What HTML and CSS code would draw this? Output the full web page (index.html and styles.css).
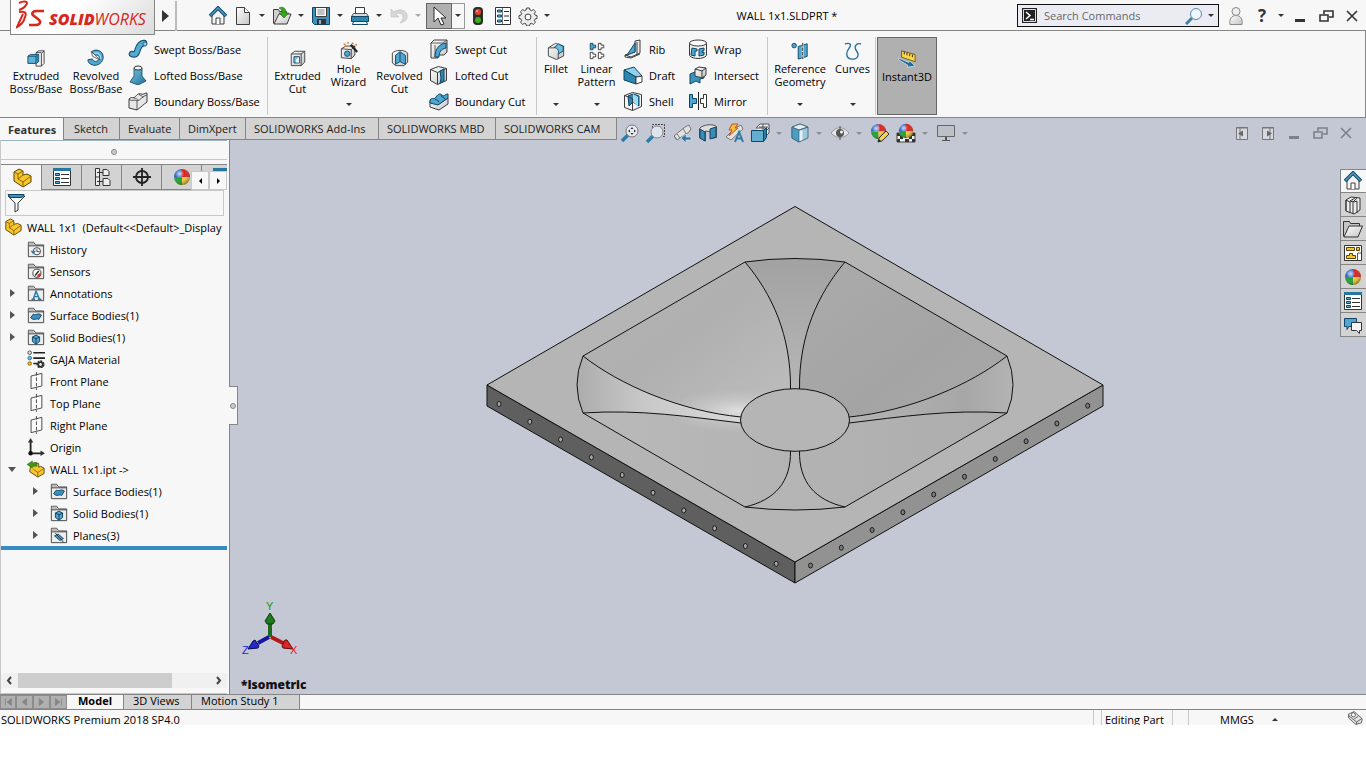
FILE: index.html
```html
<!DOCTYPE html>
<html lang="en">

<head>
    <meta charset="utf-8">
    <title>WALL 1x1.SLDPRT *</title>
    <link rel="stylesheet" href="styles.css">
</head>

<body>

<!-- icon sprite, all icons on a 20x20 grid -->
<svg class="sprite" width="0" height="0" aria-hidden="true">
    <defs>
        <linearGradient id="g-blue" x1="0" y1="0" x2="1" y2="1"><stop offset="0" stop-color="#7fc6e4"/><stop offset="1" stop-color="#1f6d98"/></linearGradient>
        <linearGradient id="g-grey" x1="0" y1="0" x2="1" y2="1"><stop offset="0" stop-color="#ffffff"/><stop offset="1" stop-color="#c4c4c4"/></linearGradient>
        <radialGradient id="g-shine" cx=".35" cy=".3" r=".75"><stop offset="0" stop-color="#fff" stop-opacity=".8"/><stop offset=".4" stop-color="#fff" stop-opacity="0"/><stop offset="1" stop-color="#000" stop-opacity=".45"/></radialGradient>
    </defs>

    <symbol id="i-home" viewBox="0 0 20 20"><path d="M4 9v9h12V9l-6-6z" fill="#f4f4f4" stroke="#3c3c3c"/><path d="M8 18v-6h4v6" fill="#fff" stroke="#3c3c3c"/><path d="M2 10l8-8 8 8" fill="none" stroke="#0f4565" stroke-width="3.500"/><path d="M2.500 9.500l7.500-7.500 7.500 7.500" fill="none" stroke="#4f9cc4" stroke-width="1.500"/></symbol>
    <symbol id="i-new" viewBox="0 0 20 20"><path d="M3.500 1.500h8l5 5v12h-13z" fill="url(#g-grey)" stroke="#3c3c3c" stroke-linejoin="round"/><path d="M11.500 1.500v5h5" fill="#fff" stroke="#3c3c3c"/></symbol>
    <symbol id="i-open" viewBox="0 0 20 20"><path d="M1.500 17.500v-14h5l1 2h7v3" fill="#cfcfcf" stroke="#3c3c3c"/><path d="M2 18l5-10h12l-4 10z" fill="url(#g-grey)" stroke="#3c3c3c"/><path d="M7 2c4-2 7 0 7 5h3l-5 5-5-5h3c0-3-1-4-3-5z" fill="#3aa51c" stroke="#1d6b0b" stroke-width=".6"/></symbol>
    <symbol id="i-save" viewBox="0 0 20 20"><path d="M1.500 1.500h17v17h-15l-2-2z" fill="#3f8fb8" stroke="#0f4565"/><path d="M4.500 1.500h11v9h-11z" fill="#fafafa" stroke="#3c3c3c"/><path d="M6.500 4h7M6.500 6h7M6.500 8h7" stroke="#888"/><path d="M6 13h9v5.500H6z" fill="#333"/><path d="M8 14h2v4H8z" fill="#9ac"/></symbol>
    <symbol id="i-print" viewBox="0 0 20 20"><path d="M5.500 9V1.500h9V9" fill="#fff" stroke="#3c3c3c"/><path d="M3.500 7.500h13l2 3H1.500z" fill="#d9d9d9" stroke="#555"/><path d="M1.500 10.500h17v5h-17z" fill="#2f86b0" stroke="#0f4565"/><path d="M3.500 15.500h13l1 3h-15z" fill="#e8f4fa" stroke="#0f4565"/></symbol>
    <symbol id="i-undo" viewBox="0 0 20 20"><path d="M2 3v8h8l-3-3c4-2 7 0 7 3s-2 4-3 6c5-1 8-4 7-8-1-5-8-7-13-3z" fill="#d7d7d7" stroke="#c0c0c0" stroke-width=".7"/></symbol>
    <symbol id="i-cursor" viewBox="0 0 20 20"><path d="M5 1v15l4-4 3 7 3-1-3-6h5z" fill="#fff" stroke="#2b2b2b"/></symbol>
    <symbol id="i-light" viewBox="0 0 20 20"><rect x="5" y="1" width="10" height="18" rx="4" fill="#2d2d2d"/><circle cx="10" cy="6" r="3" fill="#e8432a"/><circle cx="10" cy="14" r="3" fill="#39b020"/><circle cx="9" cy="5" r="1" fill="#ff9c80"/></symbol>
    <symbol id="i-list" viewBox="0 0 20 20"><path d="M1.500 1.500h17v17h-17z" fill="#fff" stroke="#333"/><path d="M1 1h18v3H1z" fill="#27779f"/><path d="M3.500 6.500h4v2h-4zM3.500 10.500h4v2h-4zM3.500 14.500h4v2h-4z" fill="#5ab0d8" stroke="#0f4565"/><path d="M9 7.500h8M9 11.500h8M9 15.500h8" stroke="#333"/></symbol>
    <symbol id="i-options" viewBox="0 0 20 20"><path d="M2.500 1.500h15v17h-15z" fill="#fff" stroke="#333"/><path d="M9.500 2v16" stroke="#777"/><path d="M4.500 4h4v2h-4zM4.500 9h4v2h-4zM4.500 14h4v2h-4z" fill="#5ab0d8" stroke="#0f4565"/><path d="M11 5.500h5M11 10h5M11 14.500h5" stroke="#333"/></symbol>
    <symbol id="i-gear" viewBox="0 0 20 20"><path d="M8.500 2h3l.5 2 1.500.7 1.900-1.100 2.100 2.100-1.100 1.900.6 1.400 2 .5v3l-2 .5-.6 1.500 1.100 1.800-2.100 2.100-1.900-1.100-1.500.6-.5 2h-3l-.5-2-1.500-.6-1.800 1.100-2.200-2.100 1.100-1.800L3 13l-2-.5v-3L3 9l.6-1.400-1.100-1.900 2.200-2.100 1.800 1.100L8 4z" fill="#ececec" stroke="#444"/><circle cx="10" cy="11" r="3" fill="#fff" stroke="#444"/></symbol>
    <symbol id="i-user" viewBox="0 0 20 20"><path d="M4 18.500c-1-6 2-9 6-9s7 3 6 9z" fill="url(#g-grey)" stroke="#888"/><circle cx="10" cy="5.500" r="4" fill="#eee" stroke="#888"/></symbol>
    <symbol id="i-min" viewBox="0 0 20 20"><path d="M5 13h10v3H5z" fill="currentColor"/></symbol>
    <symbol id="i-restore" viewBox="0 0 20 20"><path d="M8 8.500V5h9v6h-4" fill="none" stroke="currentColor" stroke-width="1.600"/><path d="M4 9h8v6H4z" fill="none" stroke="currentColor" stroke-width="1.600"/></symbol>
    <symbol id="i-close" viewBox="0 0 20 20"><path d="M5 5l10 10M15 5L5 15" fill="none" stroke="currentColor" stroke-width="1.600"/></symbol>

    <symbol id="i-exboss" viewBox="0 0 20 20"><path d="M10 4l3-2h6v14l-3 3h-6z" fill="#f3f3f3" stroke="#3c3c3c"/><path d="M16 19V5l3-3M10 4h6" fill="none" stroke="#3c3c3c"/><path d="M1 8l3-2h9v8l-3 2H1z" fill="#5fb2d8" stroke="#0f4565"/><path d="M1 8h9v8M10 8l3-2" fill="none" stroke="#0f4565"/><path d="M10 8l3-2v8l-3 2z" fill="#2f7ba3"/></symbol>
    <symbol id="i-revboss" viewBox="0 0 20 20"><path d="M5 3c5-4 13-1 13 6 0 6-6 10-11 9-4-1-6-3-6-6l5-1c1 3 5 4 7 1 2-4-1-6-4-5z" fill="#4fa6d0" stroke="#0f4565"/><path d="M8 5c5-2 8 2 7 6" fill="none" stroke="#9fd8ee" stroke-width="1.500"/><path d="M5 3l4 4 5 5-8-4z" fill="#fff" stroke="#333" stroke-width=".8"/></symbol>
    <symbol id="i-sweep" viewBox="0 0 20 20"><path d="M4 15c8 3 3-10 12-11" fill="none" stroke="#0f4565" stroke-width="6.500" stroke-linecap="round"/><path d="M4 15c8 3 3-10 12-11" fill="none" stroke="#56aad2" stroke-width="4.500" stroke-linecap="round"/><circle cx="17" cy="5" r="2" fill="#8fd0ea" stroke="#0f4565" stroke-width=".7"/></symbol>
    <symbol id="i-loft" viewBox="0 0 20 20"><path d="M6 3v8l-4 6 8 3 8-4-4-5V3z" fill="url(#g-blue)" stroke="#0f4565" stroke-width=".8"/><ellipse cx="10" cy="3" rx="4" ry="2" fill="#f4f4f4" stroke="#333"/></symbol>
    <symbol id="i-bound" viewBox="0 0 20 20"><path d="M1 8c3-3 4 0 6-2s3-4 6-3 3-1 6-1v9c-3 2-6 5-10 8l-8-2z" fill="#e7e7e7" stroke="#3c3c3c"/><path d="M1 8c3 3 5 0 8 2 4-1 5-5 10-6M9 10v9M5 6c2 3 4 0 5 4M11 3c1 3 3 0 4 4" fill="none" stroke="#3c3c3c" stroke-width=".8"/></symbol>
    <symbol id="i-excut" viewBox="0 0 20 20"><path d="M2.500 5.500l4-3h11v12l-4 4h-11z" fill="url(#g-grey)" stroke="#3c3c3c"/><path d="M2.500 5.500h11v13M13.500 5.500l4-3" fill="none" stroke="#3c3c3c"/><path d="M5.500 8.500h6v7h-6z" fill="#7fc6e4" stroke="#0f4565"/><path d="M11 9v6H8v-3z" fill="#fff"/></symbol>
    <symbol id="i-hole" viewBox="0 0 20 20"><path d="M1.500 7.500l5-3h10v10l-4 4-11-1z" fill="url(#g-grey)" stroke="#3c3c3c"/><path d="M1.500 7.500l11 1v10M12.500 8.500l4-4" fill="none" stroke="#3c3c3c"/><circle cx="8" cy="13" r="3" fill="#4fa6d0" stroke="#0f4565"/><path d="M12 3l7 8" stroke="#222" stroke-width="2.500"/><path d="M4 2l2 1M9 0v2M13 1l2 1M17 3h2M5 5l2-1" stroke="#d7792a" stroke-width="1.500"/></symbol>
    <symbol id="i-revcut" viewBox="0 0 20 20"><path d="M1.500 4.500c4-4 13-4 17 0v10l-4 4h-9l-4-3z" fill="url(#g-grey)" stroke="#3c3c3c"/><path d="M5 7l5-4 6 4v10l-6-3-5 3z" fill="#4fa6d0" stroke="#0f4565"/><path d="M10 3v11" stroke="#0f4565"/></symbol>
    <symbol id="i-sweepcut" viewBox="0 0 20 20"><path d="M2 4l3-3h13v12l-3 3H9v3H2z" fill="url(#g-grey)" stroke="#3c3c3c"/><path d="M2 4h12l4-3M6 18V6" fill="none" stroke="#3c3c3c" stroke-width=".8"/><path d="M6 18c0-8 4-13 11-14v5c-5 1-7 4-7 9z" fill="#4fa6d0" stroke="#0f4565"/></symbol>
    <symbol id="i-loftcut" viewBox="0 0 20 20"><path d="M1.500 4.500l8-3 8 2v12l-9 4-7-4z" fill="url(#g-grey)" stroke="#3c3c3c"/><path d="M1.500 4.500l7 3v12M8.500 7.500l9-4" fill="none" stroke="#3c3c3c"/><path d="M11 6l4-2v12l-4 2 1-5z" fill="#2f86b0" stroke="#0f4565"/></symbol>
    <symbol id="i-boundcut" viewBox="0 0 20 20"><path d="M1 10l9 3 9-6v6l-9 6-9-3z" fill="url(#g-grey)" stroke="#3c3c3c"/><path d="M1 9c3-3 4 0 6-3s4-4 6-2 3-1 6-1v4l-10 7-8-2z" fill="#4fa6d0" stroke="#0f4565"/><path d="M5 7c2 3 4 1 5 4M12 4c0 3 3 1 4 4" fill="none" stroke="#0f4565"/></symbol>
    <symbol id="i-fillet" viewBox="0 0 20 20"><path d="M1.500 6.500l8-5 9 3v11l-8 4-9-4z" fill="url(#g-grey)" stroke="#3c3c3c"/><path d="M8 6l5-4 5 3v5l-5 3c0-4-1-6-5-7z" fill="#6dbde0" stroke="#0f4565"/><path d="M1.500 6.500h7M12.500 12v7" fill="none" stroke="#3c3c3c"/></symbol>
    <symbol id="i-pattern" viewBox="0 0 20 20"><path d="M2.500 1.500h3v2h3v3h-3v2h-3z" fill="#4fa6d0" stroke="#0f4565"/><path d="M11.500 1.500h3v2h3v3h-3v2h-3zM2.500 11.500h3v2h3v3h-3v2h-3zM11.500 11.500h3v2h3v3h-3v2h-3z" fill="#fff" stroke="#333"/></symbol>
    <symbol id="i-rib" viewBox="0 0 20 20"><path d="M12 2l5-1v13l-9 4-6-2 10-3z" fill="#eee" stroke="#3c3c3c"/><path d="M12 4v9l-8 3z" fill="#4fa6d0" stroke="#0f4565"/><path d="M14 3v13M2 16v2l6 1 9-4" fill="none" stroke="#3c3c3c"/></symbol>
    <symbol id="i-draft" viewBox="0 0 20 20"><path d="M1 5l10-3 8 9-6 1z" fill="#8fd0ea" stroke="#0f4565"/><path d="M1 5l12 7v7L1 15z" fill="#2f86b0" stroke="#0f4565"/><path d="M13 12l6-1v6l-6 2z" fill="#fff" stroke="#3c3c3c"/></symbol>
    <symbol id="i-shell" viewBox="0 0 20 20"><path d="M1.500 4.500l8-3 9 2v12l-9 4-8-3z" fill="#f4f4f4" stroke="#3c3c3c"/><path d="M5 5l5-2 6 2v10l-6-4-4 4z" fill="#2f86b0" stroke="#0f4565"/><path d="M10 3v8l5 4V6z" fill="#9fd8ee"/><path d="M1.500 4.500l8 3v12" fill="none" stroke="#3c3c3c"/></symbol>
    <symbol id="i-wrap" viewBox="0 0 20 20"><path d="M1.500 4.500v12c3 4 14 4 17 0v-12" fill="#eee" stroke="#3c3c3c"/><ellipse cx="10" cy="4" rx="8.500" ry="3" fill="#fff" stroke="#3c3c3c"/><path d="M4 9l5 1v2H7v5l-4-1zM16 9l-5 1v7l5-1v-3l-2 .5V12l2-.5z" fill="#4fa6d0" stroke="#0f4565"/></symbol>
    <symbol id="i-intersect" viewBox="0 0 20 20"><path d="M2 9l5-2h9v6l-4 1v4l-4-2-6 3z" fill="#3b93bd" stroke="#0f4565"/><path d="M7 4l4-2 7 1v7l-4 3-7-2z" fill="url(#g-grey)" stroke="#3c3c3c"/><path d="M7 4l7 2v7M14 6l4-3" fill="none" stroke="#3c3c3c"/></symbol>
    <symbol id="i-mirror" viewBox="0 0 20 20"><path d="M1.500 3.500h3v4h4v5h-4v4h-3z" fill="#4fa6d0" stroke="#0f4565"/><path d="M18.500 3.500h-3v4h-3v5h3v4h3z" fill="#fff" stroke="#333"/><path d="M10.500 1v18" stroke="#222"/></symbol>
    <symbol id="i-refgeo" viewBox="0 0 20 20"><circle cx="3.500" cy="4" r="2.500" fill="#4fa6d0" stroke="#0f4565"/><path d="M8 5l10-3v14L8 19z" fill="#4fa6d0" stroke="#0f4565"/><path d="M13 1v18" stroke="#fff" stroke-width="2"/><path d="M13 1v18" stroke="#222" stroke-dasharray="4 1"/></symbol>
    <symbol id="i-curves" viewBox="0 0 20 20"><path d="M1 2c8-2 7 2 4 6s-3 11 4 11 8-5 5-9-2-9 5-8" fill="none" stroke="#256f96" stroke-width="1.500"/></symbol>
    <symbol id="i-instant" viewBox="0 0 20 20"><path d="M4 1l15 4v8L4 8z" fill="#ffd84a" stroke="#6a5312"/><path d="M7 2v3M10 3v3M13 4v3M16 5v3" stroke="#222"/><path d="M1 9l11 5 1-2 6 6-9 1 1-2L1 11z" fill="#1f6d98" stroke="#e8f4fa" stroke-width=".7"/></symbol>

    <symbol id="i-zoomfit" viewBox="0 0 20 20"><path d="M2 18l6-6" stroke="#2f7ba3" stroke-width="3.500"/><circle cx="12" cy="8" r="6" fill="#e6ebf0" stroke="#777"/><path d="M12 4l-1.500 2h3zM12 12l-1.500-2h3zM8 8l2-1.500v3zM16 8l-2-1.500v3z" fill="#333"/></symbol>
    <symbol id="i-zoomarea" viewBox="0 0 20 20"><path d="M6.500 5V1.500h12v12H16" fill="none" stroke="#444" stroke-dasharray="2 1"/><path d="M1 19l6-6" stroke="#2f7ba3" stroke-width="3.500"/><circle cx="11" cy="9" r="6" fill="#dde5ec" stroke="#888"/></symbol>
    <symbol id="i-prev" viewBox="0 0 20 20"><path d="M2 13l11-9 4-2 2 4-2 3-12 8z" fill="#e2e2e2" stroke="#777"/><path d="M11 5l3 6M2 13l3 4M5 11l3 4" stroke="#777"/><path d="M9 15l5-4v3h5v3h-5v3z" fill="#2f7ba3" stroke="#dfe6ec" stroke-width=".6"/></symbol>
    <symbol id="i-section" viewBox="0 0 20 20"><path d="M1.500 5.500c3-4 14-5 17-2v11l-5 1V9l-6-1v10l-6-3z" fill="#dedede" stroke="#555"/><path d="M2 6l5 3v9l-5-3zM12 6l6-2v10l-6 2z" fill="#3b8db6" stroke="#0f4565"/></symbol>
    <symbol id="i-dynview" viewBox="0 0 20 20"><path d="M2 14l9-9 6-3 2 4-12 11z" fill="#e2e2e2" stroke="#777"/><path d="M8 1h6l-3 4h3l-9 8 3-6H5z" fill="#f2c13c" stroke="#c8521c"/><path d="M11 19l4-10 4 10M12.500 15.500h5" fill="none" stroke="#2f7ba3" stroke-width="2"/></symbol>
    <symbol id="i-orient" viewBox="0 0 20 20"><path d="M6 5l4-4h9v9l-4 4" fill="#f1f1f1" stroke="#555"/><path d="M13 1v7M6 5h9M9 4h9M15 9l4-4" stroke="#555"/><path d="M1.500 7.500h12v11h-12z" fill="#62afd2" stroke="#0f4565"/><path d="M13.500 7.500l3-3v10l-3 4z" fill="#2f7ba3" stroke="#0f4565"/></symbol>
    <symbol id="i-style" viewBox="0 0 20 20"><path d="M2 4l8-3 8 3v11l-9 4-7-4z" fill="#9cc9de" stroke="#4b6f82"/><path d="M2 4l7 3v12l-7-4z" fill="#4a9fc6" stroke="#3c6d88"/><path d="M9 7l9-3M2 4l8-3 8 3-9 3z" fill="#e5eef3" stroke="#4b6f82"/><path d="M9.500 8l3-1v10l-3 1z" fill="#e5eef3"/></symbol>
    <symbol id="i-eye" viewBox="0 0 20 20"><path d="M1 10c5-7 13-7 18 0-5 6-13 6-18 0z" fill="#e2e4e8" stroke="#999"/><circle cx="10" cy="10" r="4" fill="#555"/><path d="M10 3v14" stroke="#555"/><circle cx="11.500" cy="9" r="1.500" fill="#fff"/></symbol>
    <symbol id="i-ball" viewBox="0 0 20 20"><path d="M10 10V2a8 8 0 0 0-8 8z" fill="#2c62c8"/><path d="M10 10V2a8 8 0 0 1 8 8z" fill="#d8221f"/><path d="M10 10H2a8 8 0 0 0 8 8z" fill="#1fa02c"/><path d="M10 10h8a8 8 0 0 1-8 8z" fill="#f3cc3a"/><circle cx="10" cy="10" r="8" fill="url(#g-shine)"/></symbol>
    <symbol id="i-ballpen" viewBox="0 0 20 20"><use href="#i-ball" x="-1" y="-1" width="19" height="19"/><path d="M8 19l1-4 7-7 3 3-7 7z" fill="#f4cf5a" stroke="#333"/><path d="M8 19l1-3 2 2z" fill="#222"/></symbol>
    <symbol id="i-scene" viewBox="0 0 20 20"><path d="M1 10h18v9H1z" fill="#eee" stroke="#444"/><path d="M1 10h4v3H1zM9 16h4v3H9zM15 10h4v3h-4zM4 13h3v3H4zM13 13h3v3h-3zM1 16h3v3H1zM16 16h3v3h-3z" fill="#333"/><use href="#i-ball" x="1" y="-1" width="18" height="18"/></symbol>
    <symbol id="i-monitor" viewBox="0 0 20 20"><path d="M1.500 2.500h17v11h-17z" fill="#bcc1c8" stroke="#666"/><path d="M9 14h2v3h3v1H6v-1h3z" fill="#555"/></symbol>
    <symbol id="i-paneL" viewBox="0 0 20 20"><path d="M4.500 4.500h11v12h-11z" fill="#d6d9e1" stroke="#777"/><path d="M8 4v12M4 5h12" stroke="#777"/><path d="M6 10.500l5-3v6z" fill="#666"/></symbol>
    <symbol id="i-paneR" viewBox="0 0 20 20"><path d="M4.500 4.500h11v12h-11z" fill="#d6d9e1" stroke="#777"/><path d="M12 4v12M4 5h12" stroke="#777"/><path d="M14 10.500l-5-3v6z" fill="#666"/></symbol>

    <symbol id="i-part" viewBox="0 0 20 20"><path d="M2 4l5-3 4 2v4l4-1 4 2v6l-8 5-9-6z" fill="#f7c62c" stroke="#5a430a"/><path d="M2 4l4 2v5l5 3v5M6 6l5-3M6 11l5-4M11 14l8-6" fill="none" stroke="#8a6510"/></symbol>
    <symbol id="i-import" viewBox="0 0 20 20"><path d="M4 6l5-3 4 1v4l2-1 4 2v6l-7 4-9-6z" fill="#f7c62c" stroke="#5a430a"/><path d="M7 10l5 4v5M12 14l7-5" fill="none" stroke="#8a6510"/><path d="M0 5l6-4v2h5v4H6v2z" fill="#3c9a18" stroke="#1d5c08" stroke-width=".5"/></symbol>
    <symbol id="i-config" viewBox="0 0 20 20"><path d="M3.500 1.500h4v17h-4zM11 2.500h4l2 2v4h-6zM11 11.500h5l2 2v5h-7z" fill="#eee" stroke="#333"/><path d="M5 5.500h6M5 14.500h6M3 10h4" stroke="#333"/></symbol>
    <symbol id="i-target" viewBox="0 0 20 20"><circle cx="10" cy="10" r="6" fill="none" stroke="#222" stroke-width="1.800"/><path d="M10 1v18M1 10h18" stroke="#222" stroke-width="1.800"/></symbol>
    <symbol id="i-funnel" viewBox="0 0 20 20"><path d="M2 3h17l-7 7v7l-3 2v-9z" fill="#f7fbfd" stroke="#333"/><path d="M2 1.500h16l-2 3H4z" fill="#3b93bd" stroke="#0f4565"/></symbol>
    <symbol id="i-folder" viewBox="0 0 20 20"><path d="M1.500 18.500v-16h6l2 3h9v13z" fill="#eee" stroke="#3c3c3c"/><path d="M2 3h5l2 3H2z" fill="#bbb"/><path d="M1.500 6.500h17" stroke="#3c3c3c"/></symbol>
    <symbol id="i-history" viewBox="0 0 20 20"><use href="#i-folder"/><circle cx="11" cy="12.500" r="4" fill="#fff" stroke="#333"/><path d="M11 10v3h3" fill="none" stroke="#333"/><path d="M4 12h6l-3 4z" fill="#2f86b0"/></symbol>
    <symbol id="i-sensors" viewBox="0 0 20 20"><use href="#i-folder"/><circle cx="11" cy="12.500" r="4.500" fill="#fff" stroke="#333"/><path d="M9 15l4-5" stroke="#222" stroke-width="1.500"/><path d="M11 17a4 4 0 0 0 4-5l-3 2z" fill="#d8321c"/></symbol>
    <symbol id="i-annot" viewBox="0 0 20 20"><use href="#i-folder"/><path d="M5 17h4M12 17h4M7 17l3-9 4 9M8 14h4" fill="none" stroke="#2579a4" stroke-width="1.600"/></symbol>
    <symbol id="i-surf" viewBox="0 0 20 20"><use href="#i-folder"/><path d="M4 13l3-4c3 2 5-2 9 1l-3 5c-3-2-5 2-9-2z" fill="#3b93bd" stroke="#0f4565"/></symbol>
    <symbol id="i-solid" viewBox="0 0 20 20"><use href="#i-folder"/><path d="M6 10l4-2 4 2v5l-4 3-4-3z" fill="#4fa6d0" stroke="#0f3c58"/><path d="M6 10l4 2 4-2M10 12v6" fill="none" stroke="#0f3c58"/></symbol>
    <symbol id="i-planes" viewBox="0 0 20 20"><use href="#i-folder"/><path d="M5 11l4-2 6 5-4 2z" fill="#4fa6d0" stroke="#0f4565"/><path d="M6 8l9 10" stroke="#222"/></symbol>
    <symbol id="i-material" viewBox="0 0 20 20"><path d="M7 3h13M7 9h13M7 15h5" stroke="#222" stroke-width="1.800"/><circle cx="3" cy="3" r="2" fill="#ddd" stroke="#444"/><circle cx="3" cy="9" r="2" fill="#6dbde0" stroke="#256f96"/><circle cx="3" cy="15" r="2" fill="#f5b800" stroke="#8a6510"/><circle cx="15" cy="16" r="3" fill="none" stroke="#333" stroke-width="3" stroke-dasharray="2 .7"/><circle cx="15" cy="16" r="2.500" fill="none" stroke="#333" stroke-width="1.500"/></symbol>
    <symbol id="i-plane" viewBox="0 0 20 20"><path d="M4.500 4.500l12-3v14l-12 3z" fill="#fbfbfb" stroke="#3c3c3c"/><path d="M10.500 0v20" stroke="#3c3c3c" stroke-dasharray="4 2"/></symbol>
    <symbol id="i-origin" viewBox="0 0 20 20"><path d="M4 3v14h12" fill="none" stroke="#222" stroke-width="2"/><path d="M4 0l3 5H1zM20 17l-5-3v6z" fill="#333"/><circle cx="4" cy="17" r="2.500" fill="#111"/></symbol>

    <symbol id="i-library" viewBox="0 0 20 20"><path d="M3 5l5-3 9 1v12l-6 4-8-3z" fill="#eee" stroke="#333"/><path d="M3 5l4 2v11M7 6l5-3M7 7l3-1v13M10 7l4-4M11 7l3-1v12M3 5v11" fill="none" stroke="#333"/></symbol>
    <symbol id="i-explorer" viewBox="0 0 20 20"><path d="M.5 17.500v-15h6l1 2h9v3" fill="#c4c4c4" stroke="#333"/><path d="M1 18l5-11h13.500l-4.500 11z" fill="url(#g-grey)" stroke="#333"/></symbol>
    <symbol id="i-palette" viewBox="0 0 20 20"><path d="M1.500 2.500h17v15h-17z" fill="#fff" stroke="#333"/><path d="M3.500 4.500h8v3h-8zM13.500 4.500h3v3h-3zM3.500 15.500v-3h3v-2h3v2h3v3z" fill="#f7c62c" stroke="#5a430a"/><path d="M14.500 10v7M15 10h3" stroke="#555"/></symbol>
    <symbol id="i-forum" viewBox="0 0 20 20"><path d="M1.500 3.500h12v8H6l-2 3v-3H1.500z" fill="#4fa6d0" stroke="#0f4565"/><path d="M8.500 7.500h10v8h-2v3l-3-3h-5z" fill="#f4f4f4" stroke="#333"/></symbol>
    <symbol id="i-tag" viewBox="0 0 20 20"><path d="M2 5l7-3 10 9-1 5-7 2-9-8z" fill="#e6e6e6" stroke="#444"/><circle cx="8" cy="6" r="2.500" fill="#fff" stroke="#444"/><path d="M2 7l10 8M12 15l6-4M12 15v3M9 11l5-3" fill="none" stroke="#444"/></symbol>
</svg>

<div class="app">

<header class="titlebar">
    <a class="logo" href="#">
        <svg width="30" height="30" viewBox="0 0 30 30" aria-hidden="true">
            <g fill="none" stroke="#d8271c">
                <path d="M3 3c6-3 10-1 7 2-1 2-4 4-7 5" stroke-width="2"/>
                <path d="M3 12c6-1 8 1 6 5-1 4-4 8-8 10l6-13" stroke-width="2"/>
                <path d="M28 11h-7c-5 0-6 3-3 5l4 3c4 3 2 6-3 6h-6" stroke-width="2.600"/>
            </g>
        </svg>
        <span><b>SOLID</b>WORKS</span>
    </a>
    <button class="expand" aria-label="Expand menu"></button>
    <nav class="quick">
        <button class="tool home" aria-label="Home"><svg><use href="#i-home"/></svg></button>
        <button class="tool drop" aria-label="New"><svg><use href="#i-new"/></svg></button>
        <button class="tool drop" aria-label="Open"><svg><use href="#i-open"/></svg></button>
        <button class="tool drop" aria-label="Save"><svg><use href="#i-save"/></svg></button>
        <button class="tool drop" aria-label="Print"><svg><use href="#i-print"/></svg></button>
        <button class="tool drop off" aria-label="Undo"><svg><use href="#i-undo"/></svg></button>
        <button class="select" aria-label="Select"><svg><use href="#i-cursor"/></svg></button>
        <button class="select-more" aria-label="Select options"></button>
        <button class="tool" aria-label="Rebuild"><svg><use href="#i-light"/></svg></button>
        <button class="tool" aria-label="File properties"><svg><use href="#i-options"/></svg></button>
        <button class="tool drop" aria-label="Options"><svg><use href="#i-gear"/></svg></button>
    </nav>
    <h1>WALL 1x1.SLDPRT *</h1>
    <form class="search">
        <svg width="15" height="15" viewBox="0 0 15 15" aria-hidden="true"><path d="M0 0h15v15H0z" fill="#222"/><path d="M1.500 1.500h12v12h-12z" fill="none" stroke="#ddd"/><path d="M4 4l4 3.500L4 11M8 11.500h4" fill="none" stroke="#fff" stroke-width="1.500"/></svg>
        <input type="text" aria-label="Search Commands" placeholder="Search Commands">
        <svg width="18" height="18" viewBox="0 0 18 18" aria-hidden="true"><path d="M1 17l6-6" stroke="#3f7fa8" stroke-width="3"/><circle cx="11" cy="7" r="5.500" fill="#eef7fc" stroke="#5b88a8"/></svg>
        <i class="caret"></i>
    </form>
    <nav class="window">
        <button aria-label="Login"><svg><use href="#i-user"/></svg></button>
        <button class="help" aria-label="Help">?</button>
        <i class="caret"></i>
        <button aria-label="Minimize"><svg><use href="#i-min"/></svg></button>
        <button aria-label="Restore"><svg><use href="#i-restore"/></svg></button>
        <button aria-label="Close"><svg><use href="#i-close"/></svg></button>
    </nav>
</header>

<section class="ribbon">
    <div class="group">
        <button class="big wide"><svg><use href="#i-exboss"/></svg>Extruded Boss/Base</button>
        <button class="big wide"><svg><use href="#i-revboss"/></svg>Revolved Boss/Base</button>
        <div class="stack">
            <button><svg><use href="#i-sweep"/></svg>Swept Boss/Base</button>
            <button><svg><use href="#i-loft"/></svg>Lofted Boss/Base</button>
            <button><svg><use href="#i-bound"/></svg>Boundary Boss/Base</button>
        </div>
    </div>
    <div class="group">
        <button class="big"><svg><use href="#i-excut"/></svg>Extruded Cut</button>
        <button class="big menu"><svg><use href="#i-hole"/></svg>Hole Wizard</button>
        <button class="big"><svg><use href="#i-revcut"/></svg>Revolved Cut</button>
        <div class="stack cuts">
            <button><svg><use href="#i-sweepcut"/></svg>Swept Cut</button>
            <button><svg><use href="#i-loftcut"/></svg>Lofted Cut</button>
            <button><svg><use href="#i-boundcut"/></svg>Boundary Cut</button>
        </div>
    </div>
    <div class="group shapes">
        <button class="big slim menu"><svg><use href="#i-fillet"/></svg>Fillet</button>
        <button class="big pattern menu"><svg><use href="#i-pattern"/></svg>Linear Pattern</button>
        <div class="stack ribs">
            <button><svg><use href="#i-rib"/></svg>Rib</button>
            <button><svg><use href="#i-draft"/></svg>Draft</button>
            <button><svg><use href="#i-shell"/></svg>Shell</button>
        </div>
        <div class="stack wraps">
            <button><svg><use href="#i-wrap"/></svg>Wrap</button>
            <button><svg><use href="#i-intersect"/></svg>Intersect</button>
            <button><svg><use href="#i-mirror"/></svg>Mirror</button>
        </div>
    </div>
    <div class="group refs">
        <button class="big wide menu"><svg><use href="#i-refgeo"/></svg>Reference Geometry</button>
        <button class="big curves menu"><svg><use href="#i-curves"/></svg>Curves</button>
    </div>
    <button class="big instant"><svg><use href="#i-instant"/></svg>Instant3D</button>
</section>

<div class="tabrow">
    <nav class="tabs">
        <button class="features on">Features</button>
        <button class="sketch">Sketch</button>
        <button class="evaluate">Evaluate</button>
        <button class="dimx">DimXpert</button>
        <button class="addins">SOLIDWORKS Add-Ins</button>
        <button class="mbd">SOLIDWORKS MBD</button>
        <button class="cam">SOLIDWORKS CAM</button>
    </nav>
    <nav class="hud">
        <button aria-label="Zoom to fit"><svg><use href="#i-zoomfit"/></svg></button>
        <button aria-label="Zoom to area"><svg><use href="#i-zoomarea"/></svg></button>
        <button aria-label="Previous view"><svg><use href="#i-prev"/></svg></button>
        <button aria-label="Section view"><svg><use href="#i-section"/></svg></button>
        <button aria-label="Dynamic annotation views"><svg><use href="#i-dynview"/></svg></button>
        <button class="drop" aria-label="View orientation"><svg><use href="#i-orient"/></svg></button>
        <button class="drop" aria-label="Display style"><svg><use href="#i-style"/></svg></button>
        <button class="drop" aria-label="Hide/show items"><svg><use href="#i-eye"/></svg></button>
        <button aria-label="Edit appearance"><svg><use href="#i-ballpen"/></svg></button>
        <button class="drop" aria-label="Apply scene"><svg><use href="#i-scene"/></svg></button>
        <button class="drop" aria-label="View settings"><svg><use href="#i-monitor"/></svg></button>
    </nav>
    <nav class="docwin">
        <button aria-label="Collapse left"><svg><use href="#i-paneL"/></svg></button>
        <button aria-label="Collapse right"><svg><use href="#i-paneR"/></svg></button>
        <button aria-label="Minimize document"><svg><use href="#i-min"/></svg></button>
        <button aria-label="Restore document"><svg><use href="#i-restore"/></svg></button>
        <button aria-label="Close document"><svg><use href="#i-close"/></svg></button>
    </nav>
</div>

<main class="work">
    <aside class="manager">
        <div class="grip"><i class="dot"></i></div>
        <nav class="mtabs">
            <button class="on" aria-label="FeatureManager"><svg><use href="#i-part"/></svg></button>
            <button aria-label="PropertyManager"><svg><use href="#i-list"/></svg></button>
            <button aria-label="ConfigurationManager"><svg><use href="#i-config"/></svg></button>
            <button aria-label="DimXpertManager"><svg><use href="#i-target"/></svg></button>
            <button aria-label="DisplayManager"><svg><use href="#i-ball"/></svg></button>
            <button aria-label="CAM"><svg><use href="#i-list"/></svg></button>
            <div class="mscroll"><button class="prev" aria-label="Previous tab"></button><button class="next" aria-label="Next tab"></button></div>
        </nav>
        <div class="filter">
            <svg><use href="#i-funnel"/></svg>
            <input type="text" aria-label="Filter">
        </div>
        <ul class="tree">
            <li class="root"><svg><use href="#i-part"/></svg>WALL 1x1&nbsp; (Default&lt;&lt;Default&gt;_Display</li>
            <li><svg><use href="#i-history"/></svg>History</li>
            <li><svg><use href="#i-sensors"/></svg>Sensors</li>
            <li class="closed"><svg><use href="#i-annot"/></svg>Annotations</li>
            <li class="closed"><svg><use href="#i-surf"/></svg>Surface Bodies(1)</li>
            <li class="closed"><svg><use href="#i-solid"/></svg>Solid Bodies(1)</li>
            <li><svg><use href="#i-material"/></svg>GAJA Material</li>
            <li><svg><use href="#i-plane"/></svg>Front Plane</li>
            <li><svg><use href="#i-plane"/></svg>Top Plane</li>
            <li><svg><use href="#i-plane"/></svg>Right Plane</li>
            <li><svg><use href="#i-origin"/></svg>Origin</li>
            <li class="opened"><svg><use href="#i-import"/></svg>WALL 1x1.ipt -&gt;</li>
            <li class="closed sub"><svg><use href="#i-surf"/></svg>Surface Bodies(1)</li>
            <li class="closed sub"><svg><use href="#i-solid"/></svg>Solid Bodies(1)</li>
            <li class="closed sub"><svg><use href="#i-planes"/></svg>Planes(3)</li>
        </ul>
        <div class="hscroll">
            <svg viewBox="0 0 17 15"><path d="M10 4L7 7.500l3 3.500" fill="none" stroke="#444" stroke-width="2"/></svg>
            <div class="track"><div class="thumb"></div></div>
            <svg viewBox="0 0 17 15"><path d="M7 4l3 3.500L7 11" fill="none" stroke="#444" stroke-width="2"/></svg>
        </div>
    </aside>

    <section class="viewport">
        <div class="splitter"><i class="dot"></i></div>

        <svg class="model" viewBox="485 205 620 380" role="img" aria-label="WALL 1x1 isometric view">
            <defs>
                <linearGradient id="m-ul" x1="0" y1="0" x2="1" y2="1"><stop offset="0" stop-color="#b2b2b2"/><stop offset=".5" stop-color="#b0b0b0"/><stop offset="1" stop-color="#bebebe"/></linearGradient>
                <linearGradient id="m-ur" x1="0" y1="0" x2="1" y2="1"><stop offset="0" stop-color="#ababab"/><stop offset=".6" stop-color="#a4a4a4"/><stop offset="1" stop-color="#a9a9a9"/></linearGradient>
                <linearGradient id="m-l" x1="0" y1="0" x2="1" y2="0"><stop offset="0" stop-color="#acacac"/><stop offset=".4" stop-color="#c8c8c8"/><stop offset="1" stop-color="#d8d8d8"/></linearGradient>
                <linearGradient id="m-r" x1="0" y1="0" x2="1" y2="0"><stop offset="0" stop-color="#b4b4b4"/><stop offset=".7" stop-color="#a7a7a7"/><stop offset="1" stop-color="#b3b3b3"/></linearGradient>
                <linearGradient id="m-t" x1="0" y1="0" x2="0" y2="1"><stop offset="0" stop-color="#a2a2a2"/><stop offset="1" stop-color="#b6b6b6"/></linearGradient>
                <linearGradient id="m-b" x1="0" y1="0" x2="1" y2="0"><stop offset="0" stop-color="#b9b9b9"/><stop offset="1" stop-color="#adadad"/></linearGradient>
                <radialGradient id="m-glow"><stop offset="0" stop-color="#e4e4e4" stop-opacity=".9"/><stop offset=".5" stop-color="#d8d8d8" stop-opacity=".4"/><stop offset="1" stop-color="#d0d0d0" stop-opacity="0"/></radialGradient>
            </defs>
            <g stroke="#111" stroke-linejoin="round">
                <path d="M487 385l308 177v21L487 406z" fill="#5f5f5f"/>
                <path d="M795 562l308-177v21L795 583z" fill="#929292"/>
                <path d="M795 206.500L1103 385 795 562 487 385z" fill="#b5b5b5"/>
            </g>
            <g stroke="none">
                <path d="M745 262L583 356C620 385 680 411 741 417L791 388C791 335 772 294 745 262z" fill="url(#m-ul)"/>
                <path d="M845 262l162 94C970 385 910 411 849 417L799 388C799 335 818 294 845 262z" fill="url(#m-ur)"/>
                <path d="M745 262Q795 255 845 262C818 294 799 335 799 388H791C791 335 772 294 745 262z" fill="url(#m-t)"/>
                <path d="M583 413L745 507C775 500 791 482 790.500 451H799.500C799 482 815 500 845 507L1007 413C950 409 900 417 849 423H741C690 417 640 409 583 413z" fill="url(#m-b)"/>
                <ellipse cx="738" cy="411" rx="72" ry="22" fill="url(#m-glow)"/>
                <path d="M583 356Q571 385 583 413C640 409 690 417 741 423V417C680 411 620 385 583 356z" fill="url(#m-l)"/>
                <path d="M1007 356Q1019 385 1007 413C950 409 900 417 849 423V417C910 411 970 385 1007 356z" fill="url(#m-r)"/>
            </g>
            <g fill="none" stroke="#111">
                <path d="M745 262Q795 255 845 262L1007 356Q1019 385 1007 413L845 507Q795 513 745 507L583 413Q571 385 583 356z"/>
                <path d="M745 262C772 294 791 335 790.500 389M845 262C818 294 799 335 799.500 389"/>
                <path d="M583 356C620 385 680 411 741 417M583 413C640 409 690 417 741 423"/>
                <path d="M1007 356C970 385 910 411 849 417M1007 413C950 409 900 417 849 423"/>
                <path d="M745 507C775 500 791 482 790.500 451M845 507C815 500 799 482 799.500 451"/>
                <ellipse cx="795" cy="420" rx="54.500" ry="31.300" fill="#b5b5b5"/>
            </g>
            <g id="holes" stroke="#1c1c1c"></g>
        </svg>

        <div class="triad">
            <svg width="60" height="60" viewBox="0 0 60 60" role="img" aria-label="View axes">
                <path d="M29 38V24" stroke="#1d6b1d" stroke-width="4"/><path d="M29 14l5 8-2 3h-6l-2-3z" fill="#1e7a1e" stroke="#0d3f0d"/>
                <path d="M30 38l14 7" stroke="#b51616" stroke-width="4"/><path d="M52 50l-10-1-1-2 3-6 2 0z" fill="#d92626" stroke="#5c0b0b"/>
                <path d="M28 38l-11 6" stroke="#1515a5" stroke-width="4"/><path d="M7 50l10-1 1-2-4-6-2 1z" fill="#2626cc" stroke="#0a0a55"/>
                <text x="25" y="11" fill="#159a15">Y</text><text x="49" y="55" fill="#f01818">X</text><text x="1" y="55" fill="#1818f0">Z</text>
            </svg>
            <b>*Isometric</b>
        </div>

        <nav class="taskpane">
            <button class="on" aria-label="Resources"><svg><use href="#i-home"/></svg></button>
            <button aria-label="Design library"><svg><use href="#i-library"/></svg></button>
            <button aria-label="File explorer"><svg><use href="#i-explorer"/></svg></button>
            <button aria-label="View palette"><svg><use href="#i-palette"/></svg></button>
            <button aria-label="Appearances"><svg><use href="#i-ball"/></svg></button>
            <button aria-label="Custom properties"><svg><use href="#i-list"/></svg></button>
            <button aria-label="Forum"><svg><use href="#i-forum"/></svg></button>
        </nav>
    </section>
</main>

<nav class="doctabs">
    <div class="steps">
        <button aria-label="First"><svg viewBox="0 0 16 14"><path d="M5 3v8M12 3L7 7l5 4z"/></svg></button>
        <button aria-label="Previous"><svg viewBox="0 0 16 14"><path d="M11 3L6 7l5 4z"/></svg></button>
        <button aria-label="Next"><svg viewBox="0 0 16 14"><path d="M6 3l5 4-5 4z"/></svg></button>
        <button aria-label="Last"><svg viewBox="0 0 16 14"><path d="M5 3l5 4-5 4zM12 3v8"/></svg></button>
    </div>
    <button class="tab-model on">Model</button>
    <button class="tab-views">3D Views</button>
    <button class="tab-motion">Motion Study 1</button>
</nav>

<footer class="status">
    <span class="product">SOLIDWORKS Premium 2018 SP4.0</span>
    <span class="cell gap"></span>
    <span class="cell mode">Editing Part</span>
    <span class="cell gap2"></span>
    <span class="cell units">MMGS <i class="caret up"></i></span>
    <svg><use href="#i-tag"/></svg>
</footer>

</div>

<script>
    // bolt holes along the two visible edges of the slab
    var html = '';
    for (var i = 0; i < 10; i++) {
        var step = i * 30.8, drop = i * 17.75;
        html += '<ellipse cx="' + (499 + step) + '" cy="' + (404 + drop) + '" rx="2" ry="2.500" fill="#a8a8a8"/>';
        html += '<ellipse cx="' + (810.5 + step) + '" cy="' + (565.5 - drop) + '" rx="2" ry="2.500" fill="#7a7a7a"/>';
    }
    document.getElementById('holes').innerHTML = html;
</script>

</body>

</html>
```

FILE: styles.css
```css
* {
    box-sizing: border-box;
}
body {
    margin: 0;
    background: #fff;
    color: #000;
    font-family: "Open Sans", "Noto Sans", sans-serif;
    font-size: 11px;
    line-height: 13px;
}
button, input {
    font: inherit;
    color: inherit;
    background: none;
    border: 0;
    padding: 0;
    margin: 0;
}
svg {
    width: 20px;
    height: 20px;
    flex: none;
    display: block;
}
.sprite {
    position: absolute;
    width: 0;
    height: 0;
}
.app {
    display: flex;
    flex-direction: column;
    min-height: calc(100vh - 43px);
    background: #f7f7f7;
}
.caret {
    width: 0;
    height: 0;
    border: 3px solid transparent;
    border-top-color: #333;
    border-bottom: 0;
}
.caret.up {
    border-top: 0;
    border-bottom: 3px solid #333;
}
.dot {
    width: 6px;
    height: 6px;
    border: 1px solid #888;
    border-radius: 50%;
    background: #ccc;
}

/* title bar */
.titlebar {
    display: flex;
    align-items: center;
    height: 31px;
    padding-top: 1px;
    border-bottom: 1px solid #858585;
}
.logo {
    position: relative;
    z-index: 2;
    align-self: flex-start;
    display: flex;
    align-items: center;
    gap: 3px;
    width: 145px;
    height: 35px;
    margin: -1px 0 0 10px;
    padding: 0 0 4px 5px;
    border: 1px solid #858585;
    border-top: 0;
    background: linear-gradient(135deg, #fff 40%, #dcdcdc);
    color: #d8271c;
    font-size: 16px;
    font-style: italic;
    text-decoration: none;
}
.logo svg {
    width: 30px;
    height: 30px;
}
.logo span {
    padding-top: 9px;
}
.logo b {
    font-weight: 800;
}
.expand {
    width: 22px;
    height: 30px;
    border-right: 2px solid #bbb;
}
.expand::before {
    content: "";
    display: block;
    width: 0;
    margin-left: 7px;
    border: 6px solid transparent;
    border-left: 7px solid #333;
    border-right: 0;
}
.quick {
    display: flex;
    align-items: center;
    margin-left: 31px;
}
.tool {
    display: flex;
    align-items: center;
    margin-right: 5px;
}
.drop {
    display: flex;
    align-items: center;
    margin-right: 2px;
}
.drop::after {
    content: "";
    margin: 0 5px 0 6px;
    border: 3px solid transparent;
    border-top-color: #333;
    border-bottom: 0;
}
.tool.off {
    margin-right: 0;
}
.tool.off::after {
    border-top-color: #aaa;
}
.select {
    width: 26px;
    height: 26px;
    padding-left: 2px;
    border: 1px solid #666;
    background: #b0b0b0;
}
.select-more {
    width: 13px;
    height: 26px;
    margin-right: 3px;
    border: 1px solid #999;
    border-left: 0;
}
.select-more::before {
    content: "";
    display: block;
    width: 0;
    margin: 0 auto;
    border: 3px solid transparent;
    border-top-color: #333;
    border-bottom: 0;
}
.titlebar h1 {
    flex: 1;
    margin: 0;
    font-size: 11px;
    font-weight: normal;
    text-align: center;
}
.search {
    display: flex;
    align-items: center;
    width: 202px;
    height: 23px;
    padding: 0 4px;
    border: 1px solid #111;
    background: #ebecf3;
}
.search svg {
    width: 18px;
    height: 18px;
}
.search svg:first-child {
    width: 15px;
    height: 15px;
}
.search input {
    flex: 1;
    min-width: 0;
    padding-left: 7px;
}
.search input::placeholder {
    color: #666;
}
.search .caret {
    margin-left: 5px;
}
.window {
    display: flex;
    align-items: center;
    gap: 6px;
    padding: 0 4px 0 7px;
    color: #333;
}
.help {
    width: 20px;
    font-size: 17px;
    font-weight: 700;
}

/* ribbon */
.ribbon {
    display: flex;
    height: 87px;
    padding-top: 6px;
    border-right: 1px solid #858585;
    border-bottom: 1px solid #858585;
}
.group {
    display: flex;
    height: 78px;
    padding-left: 4px;
    border-right: 1px solid #c8c8c8;
}
.group:first-child {
    padding-left: 6px;
}
.group.shapes {
    padding-left: 0;
}
.group.refs {
    padding-left: 2px;
}
.big {
    display: flex;
    flex-direction: column;
    align-items: center;
    gap: 2px;
    width: 51px;
    padding-top: 12px;
    text-align: center;
}
.big svg {
    width: 18px;
    height: 18px;
}
.big.wide {
    width: 60px;
}
.big.slim {
    width: 38px;
}
.big.pattern {
    width: 43px;
}
.big.curves {
    width: 45px;
}
.big.menu {
    position: relative;
    padding-top: 5px;
}
.big.menu::after {
    content: "";
    position: absolute;
    bottom: 9px;
    left: 50%;
    margin-left: -3px;
    border: 3px solid transparent;
    border-top-color: #333;
    border-bottom: 0;
}
.stack {
    display: flex;
    flex-direction: column;
    width: 141px;
    margin-top: -1px;
    padding-left: 2px;
}
.stack.cuts {
    width: 111px;
    padding-left: 4px;
}
.stack.ribs {
    width: 68px;
    padding-left: 5px;
}
.stack.wraps {
    width: 81px;
}
.stack button {
    display: flex;
    align-items: center;
    gap: 6px;
    height: 26px;
    white-space: nowrap;
}
.instant {
    width: 60px;
    height: 78px;
    margin-left: 1px;
    border: 1px solid #666;
    background: #b0b0b0;
}

/* command tabs and heads-up toolbar */
.tabrow {
    position: relative;
    z-index: 1;
    display: flex;
    height: 22px;
    background: #c4c8d4;
}
.tabs, .hud, .docwin {
    display: flex;
}
.tabs button {
    padding-left: 8px;
    border: solid #858585;
    border-width: 0 1px 1px 0;
    background: #d3d3d3;
    color: #222;
    text-align: left;
    white-space: nowrap;
}
.tabs button.on {
    background: #f7f7f7;
    border-bottom: 0;
    color: #333;
    font-weight: 700;
}
.features {
    width: 64px;
}
.tabs .sketch {
    width: 56px;
    padding-left: 10px;
}
.evaluate {
    width: 60px;
}
.dimx {
    width: 66px;
}
.addins {
    width: 133px;
}
.mbd {
    width: 117px;
}
.cam {
    width: 121px;
}
.hud {
    padding: 5px 0 0 3px;
}
.hud button {
    height: 20px;
    margin-right: 6px;
}
.hud .drop {
    margin-right: 3px;
}
.hud .drop::after {
    border-top-color: #8a8d95;
}
.docwin {
    gap: 6px;
    margin-left: auto;
    padding: 5px 10px 0 0;
    color: #7e8188;
}

/* feature manager */
.work {
    flex: 1;
    display: flex;
}
.manager {
    display: flex;
    flex-direction: column;
    width: 230px;
    padding-right: 2px;
    border-left: 1px solid #c8c8c8;
    border-right: 1px solid #858585;
    overflow: hidden;
}
.grip {
    display: flex;
    justify-content: center;
    align-items: center;
    height: 20px;
    margin-bottom: 4px;
    padding-top: 4px;
    border-top: 1px solid #9db4be;
    border-bottom: 1px solid #c8c8c8;
}
.mtabs {
    position: relative;
    display: flex;
    height: 26px;
    padding-left: 1px;
    border-top: 1px solid #858585;
    overflow: hidden;
}
.mtabs > button {
    display: flex;
    flex: none;
    justify-content: center;
    align-items: center;
    width: 40px;
    border: solid #858585;
    border-width: 0 1px 1px 0;
    background: #d3d3d3;
}
.mtabs > button.on {
    background: #f7f7f7;
    border-bottom: 0;
}
.mscroll {
    position: absolute;
    right: 0;
    bottom: 0;
    display: flex;
}
.mscroll button {
    display: flex;
    justify-content: center;
    align-items: center;
    width: 18px;
    height: 19px;
    border: 1px solid #c8c8c8;
    background: #f7f7f7;
}
.mscroll button::before {
    content: "";
    border: 3px solid transparent;
}
.mscroll .prev::before {
    border-left: 0;
    border-right-color: #000;
}
.mscroll .next::before {
    border-right: 0;
    border-left-color: #000;
}
.filter {
    display: flex;
    align-items: center;
    height: 26px;
    margin: 0 3px 0 4px;
    border: 1px solid #c8c8c8;
}
.filter input {
    flex: 1;
    min-width: 0;
}
.tree {
    margin: 0;
    padding: 0;
    list-style: none;
    border-bottom: 4px solid #378bc4;
}
.tree li {
    position: relative;
    display: flex;
    align-items: center;
    gap: 4px;
    height: 22px;
    padding-left: 25px;
    white-space: nowrap;
}
.tree .root {
    padding-left: 2px;
}
.tree .sub {
    padding-left: 48px;
}
.tree svg {
    width: 20px;
    height: 18px;
}
.closed::before, .opened::before {
    content: "";
    position: absolute;
    left: 9px;
    border: 4px solid transparent;
    border-left: 5px solid #555;
    border-right: 0;
}
.opened::before {
    left: 7px;
    border: 4px solid transparent;
    border-top: 5px solid #555;
    border-bottom: 0;
}
.sub::before {
    left: 32px;
}
.hscroll {
    display: flex;
    height: 21px;
    margin-top: auto;
    border-bottom: 1px solid #c8c8c8;
    background: linear-gradient(#f0f0f0 15px, #f7f7f7 15px);
}
.hscroll svg {
    width: 17px;
    height: 15px;
}
.track {
    flex: 1;
}
.thumb {
    width: 80%;
    height: 15px;
    background: #cdcdcd;
}

/* graphics area */
.viewport {
    position: relative;
    flex: 1;
    display: flex;
    justify-content: center;
    align-items: flex-start;
    padding: 65px 6px 0 0;
    background: #c4c8d4;
}
.model {
    width: 620px;
    height: 380px;
}
.splitter {
    position: absolute;
    left: -1px;
    top: 246px;
    display: flex;
    justify-content: center;
    align-items: center;
    width: 9px;
    height: 39px;
    border: 1px solid #858585;
    border-left: 0;
    background: #f7f7f7;
}
.triad {
    position: absolute;
    left: 11px;
    bottom: 3px;
}
.triad svg {
    width: 60px;
    height: 60px;
    margin-bottom: 19px;
}
.triad text {
    font: 11px "Liberation Sans", sans-serif;
}
.triad b {
    color: #111;
    font-size: 12px;
    font-weight: 800;
}
.taskpane {
    position: absolute;
    right: 0;
    top: 29px;
    width: 26px;
    border: solid #858585;
    border-width: 1px 0 0 1px;
}
.taskpane button {
    display: flex;
    justify-content: center;
    align-items: center;
    width: 25px;
    height: 24px;
    padding-right: 1px;
    border-bottom: 1px solid #858585;
    background: #d3d3d3;
}
.taskpane .on {
    height: 23px;
    background: #f7f7f7;
}

/* document tabs */
.doctabs {
    display: flex;
    height: 16px;
    border-top: 1px solid #858585;
    border-bottom: 1px solid #858585;
}
.doctabs > button {
    padding: 0 0 2px 9px;
    border-right: 1px solid #858585;
    background: #d3d3d3;
    line-height: 12px;
    text-align: left;
}
.doctabs > button.on {
    padding-left: 11px;
    background: #f7f7f7;
    font-weight: 700;
}
.steps {
    display: flex;
    background: #b0b0b0;
}
.steps button {
    width: 17px;
    border: 1px solid #8c8c8c;
}
.steps button:first-child {
    width: 16px;
}
.steps svg {
    width: 14px;
    height: 12px;
    fill: #858585;
    stroke: #858585;
}
.tab-model {
    width: 57px;
}
.tab-views {
    width: 68px;
}
.tab-motion {
    width: 108px;
}

/* status bar */
.status {
    display: flex;
    align-items: center;
    height: 15px;
    padding-left: 1px;
    line-height: 15px;
}
.product {
    flex: 1;
    padding-top: 3px;
}
.cell {
    display: flex;
    align-items: center;
    height: 15px;
    padding-top: 3px;
    border-left: 1px solid #c8c8c8;
}
.cell.gap {
    width: 8px;
}
.cell.mode {
    width: 71px;
    padding-left: 3px;
}
.cell.gap2 {
    width: 16px;
}
.cell.units {
    width: 157px;
    gap: 18px;
    padding-left: 31px;
}
.status svg {
    width: 20px;
    height: 16px;
    margin-right: 1px;
}
```
